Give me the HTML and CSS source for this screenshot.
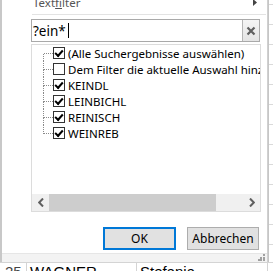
FILE: index.html
```html
<!DOCTYPE html>
<html lang="de">

<head>
    <title>Filter</title>
    <link rel="stylesheet" href="styles.css">
</head>

<body>
    <div class="screen">
        <div class="top">
            <div class="menu">
                <div class="menu_item">
                    <span>Text<u>f</u>ilter</span>
                    <svg class="sub_arrow" width="4" height="7" viewBox="0 0 4 7"><polygon points="0,0 4,3.5 0,7" fill="#444"/></svg>
                </div>
                <div class="sep"></div>
                <div class="search">
                    <div class="search_text">?ein*<span class="caret"></span></div>
                    <div class="search_clear">
                        <svg width="10" height="10" viewBox="0 0 10 10"><path d="M1.5 1.5 L8.5 8.5 M8.5 1.5 L1.5 8.5" stroke="#5f5f5f" stroke-width="2.2"/></svg>
                    </div>
                </div>
                <div class="list">
                    <div class="tree">
                        <div class="row first"><span class="conn"></span><span class="cb on"></span><span class="label">(Alle Suchergebnisse auswählen)</span></div>
                        <div class="row"><span class="conn"></span><span class="cb"></span><span class="label">Dem Filter die aktuelle Auswahl hinzufügen</span></div>
                        <div class="row"><span class="conn"></span><span class="cb on"></span><span class="label">KEINDL</span></div>
                        <div class="row"><span class="conn"></span><span class="cb on"></span><span class="label">LEINBICHL</span></div>
                        <div class="row"><span class="conn"></span><span class="cb on"></span><span class="label">REINISCH</span></div>
                        <div class="row last"><span class="conn"></span><span class="cb on"></span><span class="label">WEINREB</span></div>
                    </div>
                    <div class="hscroll">
                        <div class="sbtn"><svg width="6" height="9" viewBox="0 0 6 9"><polyline points="5,0.5 1.2,4.5 5,8.5" fill="none" stroke="#606060" stroke-width="2"/></svg></div>
                        <div class="thumb"></div>
                        <div class="track"></div>
                        <div class="sbtn"><svg width="6" height="9" viewBox="0 0 6 9"><polyline points="1,0.5 4.8,4.5 1,8.5" fill="none" stroke="#606060" stroke-width="2"/></svg></div>
                    </div>
                </div>
                <div class="buttons">
                    <button class="btn btn_ok">OK</button>
                    <button class="btn">Abbrechen</button>
                </div>
                <div class="grip_bar">
                    <svg width="7" height="7" viewBox="0 0 7 7" fill="#a0a0a0"><rect x="5" y="0" width="2" height="2"/><rect x="2" y="3" width="2" height="2"/><rect x="5" y="3" width="2" height="2"/><rect x="5" y="5" width="2" height="2"/><rect x="0" y="5" width="2" height="2"/><rect x="2" y="5" width="2" height="2"/></svg>
                </div>
            </div>
            <div class="sheet_edge"></div>
        </div>
        <div class="sheet_row">
            <div class="cell c_num">25</div>
            <div class="cell c_name">WAGNER</div>
            <div class="cell c_first">Stefania</div>
            <div class="cell c_rest"></div>
        </div>
    </div>
</body>

</html>
```
FILE: styles.css
```css
* {
    margin: 0;
    padding: 0;
    box-sizing: border-box;
}

body {
    width: 273px;
    height: 271px;
    overflow: hidden;
    background: #fff;
    font-family: "Noto Sans", "Open Sans", sans-serif;
    font-size: 11.5px;
    color: #000;
}

.screen {
    display: flex;
    flex-direction: column;
    height: 271px;
}

.top {
    display: flex;
    height: 262px;
}

.menu {
    width: 268px;
    height: 262px;
    border-left: 2px solid #c8c8c8;
    border-right: 1px solid #d0d0d0;
    display: flex;
    flex-direction: column;
    background: #fff;
}

.menu_item {
    display: flex;
    align-items: center;
    justify-content: space-between;
    height: 16px;
    margin-top: -6px;
    padding-left: 31px;
    padding-right: 10px;
    color: #555;
}

.menu_item u {
    text-decoration-thickness: 1px;
}

.sep {
    height: 1px;
    margin: 4px 1px 0 30px;
    background: #e3e3e3;
}

.search {
    display: flex;
    height: 23px;
    width: 229px;
    margin: 4px 0 0 29px;
    border: 1px solid #a9a9a9;
}

.search_text {
    flex: 1;
    display: flex;
    align-items: center;
    padding-left: 1px;
    font-size: 13.5px;
}

.caret {
    display: inline-block;
    width: 1px;
    height: 15px;
    background: #000;
    margin-left: 2px;
}

.search_clear {
    width: 17px;
    display: flex;
    align-items: center;
    justify-content: center;
    border-left: 1px solid #b5b5b5;
    background: linear-gradient(#f4f4f4, #e4e4e4);
}

.list {
    width: 230px;
    height: 168px;
    margin: 2px 0 0 29px;
    border: 1px solid #dcdcdc;
    display: flex;
    flex-direction: column;
    overflow: hidden;
}

.tree {
    flex: 1;
    padding-left: 11px;
}

.row {
    display: flex;
    align-items: center;
    height: 16px;
    white-space: nowrap;
}

.conn {
    width: 10px;
    height: 16px;
    display: flex;
    flex-direction: column;
    flex-shrink: 0;
}

.conn::before {
    content: "";
    height: 8px;
    border-left: 1px dotted #8a8a8a;
    border-bottom: 1px dotted #8a8a8a;
}

.conn::after {
    content: "";
    height: 8px;
    border-left: 1px dotted #8a8a8a;
}

.first .conn::before {
    border-left: none;
    margin-left: 1px;
}

.last .conn::after {
    border-left: none;
}

.cb {
    width: 12px;
    height: 12px;
    flex-shrink: 0;
    border: 1px solid #333;
    background: #fff;
    display: flex;
    align-items: center;
    justify-content: center;
}

.cb.on::after {
    content: "";
    width: 6px;
    height: 3px;
    border-left: 2px solid #000;
    border-bottom: 2px solid #000;
    transform: translateY(-1px) rotate(-48deg);
}

.label {
    margin-left: 3px;
}

.hscroll {
    display: flex;
    height: 17px;
    background: #f0f0f0;
}

.sbtn {
    width: 17px;
    display: flex;
    align-items: center;
    justify-content: center;
}

.thumb {
    width: 167px;
    background: #cdcdcd;
}

.track {
    flex: 1;
}

.buttons {
    display: flex;
    justify-content: flex-end;
    gap: 11px;
    margin: 15px 8px 0 0;
}

.btn {
    height: 23px;
    width: 72px;
    font-family: inherit;
    font-size: 12px;
    background: #e1e1e1;
    border: 1px solid #adadad;
    color: #000;
}

.btn_ok {
    width: 73px;
    border: 2px solid #0078d7;
}

.grip_bar {
    margin-top: auto;
    height: 9px;
    border-top: 1px solid #e6e6e6;
    background: #f3f3f3;
    display: flex;
    justify-content: flex-end;
    align-items: flex-end;
    padding: 0 2px 1px 0;
}

.sheet_edge {
    flex: 1;
    border-left: 1px solid #c6c6c6;
    background: repeating-linear-gradient(#fff 0 4px, #dadada 4px 5px, #fff 5px 20px);
}

.sheet_row {
    display: flex;
    height: 9px;
    overflow: hidden;
    font-family: "Liberation Sans", sans-serif;
    font-size: 15px;
    border-top: 1px solid #d4d4d4;
}

.cell {
    padding: 1px 0 0 3px;
    border-right: 1px solid #d4d4d4;
    line-height: 16px;
}

.c_num {
    width: 27px;
    color: #444;
    padding-left: 5px;
}

.c_name {
    width: 110px;
}

.c_first {
    width: 131px;
}

.c_rest {
    flex: 1;
    border-right: none;
}
```
